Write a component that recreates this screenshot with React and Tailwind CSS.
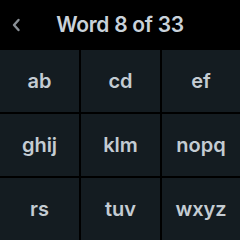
import React from 'react';

const groups = ['ab', 'cd', 'ef', 'ghij', 'klm', 'nopq', 'rs', 'tuv', 'wxyz'];

const App = () => {
    return (
        <div className="w-[240px] h-[240px] bg-black flex flex-col overflow-hidden" style={{ fontFamily: 'Inter, "Noto Sans", sans-serif' }}>
            <div className="h-[50px] flex items-center relative shrink-0">
                <svg className="absolute left-[11px] top-[18px]" width="10" height="14" viewBox="0 0 10 14" fill="none">
                    <path d="M7.5 2 L3 7 L7.5 12" stroke="#8a9096" strokeWidth="2.4" strokeLinecap="round" strokeLinejoin="round" />
                </svg>
                <h1 className="w-full text-center text-[21px] font-semibold text-[#c9d2da] tracking-[-0.3px]">Word 8 of 33</h1>
            </div>
            <div className="grid grid-cols-[79px_79px_78px] grid-rows-[62px_62px_62px] gap-[2px]">
                {groups.map((g) => (
                    <button
                        key={g}
                        className="bg-[#141c21] flex items-center justify-center text-[20px] font-semibold text-[#c4ccd3]"
                    >
                        {g}
                    </button>
                ))}
            </div>
        </div>
    );
};

export default App;
